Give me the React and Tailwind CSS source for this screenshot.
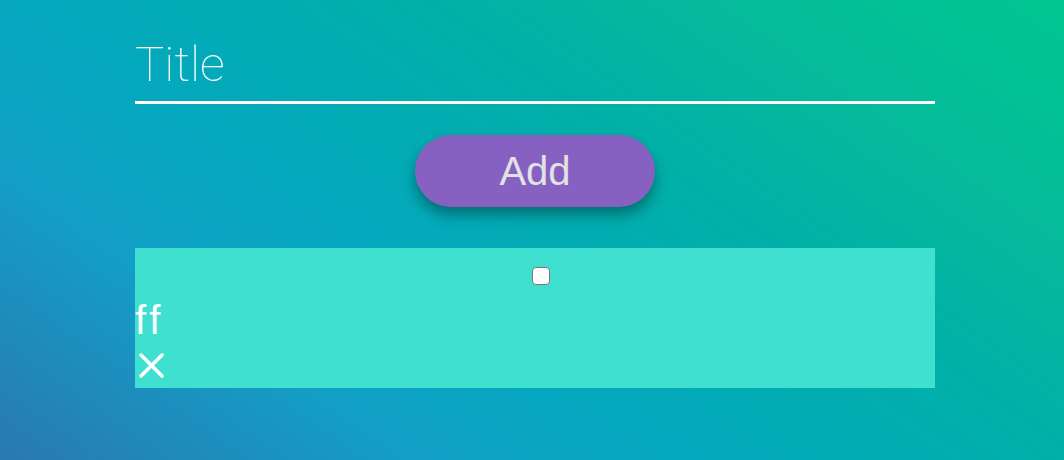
import { useState } from 'react';

const App = () => {
  const [title, setTitle] = useState('');
  const [done, setDone] = useState(false);

  return (
    <div className="h-[460px] w-full overflow-hidden bg-[linear-gradient(35deg,#2a78b2_0%,#12a0c6_25%,#05a7c0_37%,#00b0a8_63%,#05bb9b_80%,#00c690_100%)]">
      <div className="ml-[135px] flex w-[800px] flex-col pt-[37px]">
        {/* Title input */}
        <input
          value={title}
          onChange={(e) => setTitle(e.target.value)}
          placeholder="Title"
          className="w-full border-b-[3px] border-white bg-transparent pb-[8px] font-['Roboto',sans-serif] text-[49px] font-thin leading-[56px] text-white outline-none placeholder:text-white"
        />

        {/* Add button */}
        <div className="mt-[31px] flex justify-center">
          <button className="h-[72px] w-[240px] rounded-full bg-[#8761c2] font-['Liberation_Sans',Arial,sans-serif] text-[40px] text-[#e2e2e2] shadow-[0_8px_14px_rgba(0,0,0,0.35)]">
            Add
          </button>
        </div>

        {/* Todo card */}
        <div className="mt-[41px] flex h-[140px] flex-col bg-[#40e0d0] pt-[19px] font-['Liberation_Sans',Arial,sans-serif] text-white">
          <div className="flex justify-center pl-[12px]">
            <input
              type="checkbox"
              checked={done}
              onChange={() => setDone(!done)}
              className="m-0 h-[18px] w-[18px] appearance-none rounded-[4px] border-[1.5px] border-[#7a7a7a] bg-white checked:bg-[#8761c2]"
            />
          </div>
          <div className="mt-[12px] text-[40px] leading-[46px]">
            <span>f</span>
            <span className="ml-[3px]">f</span>
          </div>
          <div className="ml-[4px] mt-[10px]">
            <svg width="25" height="25" viewBox="0 0 25 25" fill="none" stroke="white" strokeWidth="3.5" strokeLinecap="round">
              <line x1="2" y1="2" x2="23" y2="23" />
              <line x1="23" y1="2" x2="2" y2="23" />
            </svg>
          </div>
        </div>
      </div>
    </div>
  );
};

export default App;
